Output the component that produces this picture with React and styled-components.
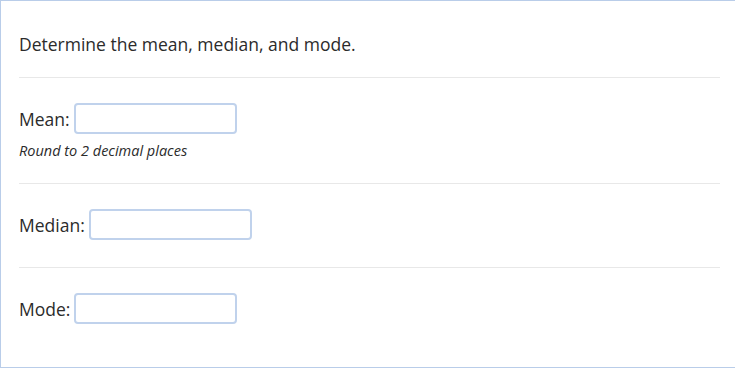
import React from "react";
import styled, { createGlobalStyle } from "styled-components";

const Global = createGlobalStyle`
  html, body { margin: 0; padding: 0; background: #fff; }
  body { font-family: "Open Sans", "DejaVu Sans", sans-serif; color: #2b2b2b; }
`;

const Frame = styled.div`
  box-sizing: border-box;
  width: 735px;
  height: 368px;
  border: 1px solid #b9cde9;
  border-right: none;
  padding: 0 15px 0 18px;
`;

const Section = styled.div`
  border-top: ${(p) => (p.$first ? "none" : "1px solid #e8e8e8")};
  padding: ${(p) => p.$pad};
`;

const Prompt = styled.p`
  margin: 0;
  font-size: 17.5px;
  line-height: 24px;
`;

const Row = styled.div`
  display: flex;
  align-items: center;
  gap: 4px;
  font-size: 17.5px;
  line-height: 24px;
`;

const Field = styled.input`
  box-sizing: border-box;
  width: 163px;
  height: 31px;
  border: 2px solid #c0d2ec;
  border-radius: 4px;
  background: #fff;
  outline: none;
  font: inherit;
  padding: 0 6px;
`;

const Hint = styled.div`
  font-size: 14.5px;
  font-style: italic;
  line-height: 18px;
  margin-top: 8px;
`;

export default function App() {
  return (
    <>
      <Global />
      <Frame>
        <Section $first $pad="31px 0 21px">
          <Prompt>Determine the mean, median, and mode.</Prompt>
        </Section>
        <Section $pad="25px 0 23px">
          <Row>
            <label>Mean:</label>
            <Field type="text" />
          </Row>
          <Hint>Round to 2 decimal places</Hint>
        </Section>
        <Section $pad="25px 0 27px">
          <Row>
            <label>Median:</label>
            <Field type="text" />
          </Row>
        </Section>
        <Section $pad="25px 0 0">
          <Row>
            <label>Mode:</label>
            <Field type="text" />
          </Row>
        </Section>
      </Frame>
    </>
  );
}
